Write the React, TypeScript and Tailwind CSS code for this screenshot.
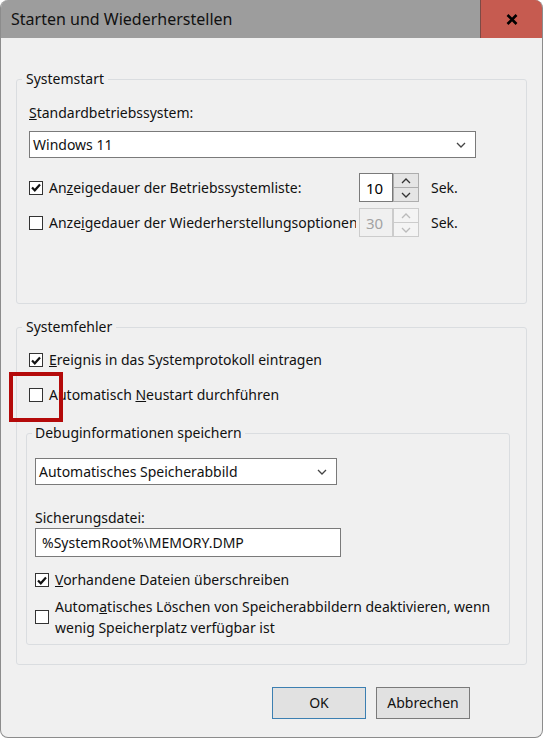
import React, { useState } from 'react';

const font = "font-['Segoe_UI','Noto_Sans',sans-serif]";

// Kleines Häkchen-Kästchen im klassischen Windows-Stil
const CheckBox = ({ checked }: { checked: boolean }) => (
  <span className="flex h-[14px] w-[14px] shrink-0 items-center justify-center border border-[#333333] bg-white">
    {checked && (
      <svg width="10" height="9" viewBox="0 0 10 9">
        <path d="M1 4.5 L3.8 7.3 L9 1.5" fill="none" stroke="#111" strokeWidth="2.2" />
      </svg>
    )}
  </span>
);

const Chevron = ({ color = '#444' }: { color?: string }) => (
  <svg width="10" height="6" viewBox="0 0 10 6">
    <path d="M1 1 L5 5 L9 1" fill="none" stroke={color} strokeWidth="1.3" />
  </svg>
);

const ChevronUp = ({ color = '#444' }: { color?: string }) => (
  <svg width="10" height="6" viewBox="0 0 10 6">
    <path d="M1 5 L5 1 L9 5" fill="none" stroke={color} strokeWidth="1.3" />
  </svg>
);

const Spinner = ({ value, disabled }: { value: string; disabled?: boolean }) => (
  <div className="flex h-[29px]">
    <div
      className={`flex w-[34px] items-center border pl-[6px] text-[15px] ${
        disabled ? 'border-[#cccccc] bg-[#f0f0f0] text-[#a3a3a3]' : 'border-[#7a7a7a] bg-white text-black'
      }`}
    >
      {value}
    </div>
    <div className={`flex w-[26px] flex-col border ${disabled ? 'border-[#cccccc]' : 'border-[#adadad]'}`}>
      <div
        className={`flex flex-1 items-center justify-center border-b ${
          disabled ? 'border-[#cccccc] bg-[#f4f4f4]' : 'border-[#adadad] bg-[#e5e5e5]'
        }`}
      >
        <ChevronUp color={disabled ? '#bbbbbb' : '#333'} />
      </div>
      <div className={`flex flex-1 items-center justify-center ${disabled ? 'bg-[#f4f4f4]' : 'bg-[#e5e5e5]'}`}>
        <Chevron color={disabled ? '#bbbbbb' : '#333'} />
      </div>
    </div>
  </div>
);

const App = () => {
  const [os] = useState('Windows 11');

  return (
    <div className={`h-[739px] w-[544px] bg-white text-[14px] leading-[20px] text-[#111] ${font}`}>
      <div className="flex h-[738px] w-[543px] flex-col overflow-hidden rounded-[8px] border border-t-0 border-[#8c8c8c] bg-[#f0f0f0]">
        {/* Titelleiste */}
        <div className="flex h-[38px] shrink-0 items-center bg-[#9d9d9d]">
          <span className="flex-1 pl-[10px] text-[16px]">Starten und Wiederherstellen</span>
          <div className="flex h-full w-[62px] items-center justify-center border-l border-[#7d4a45] bg-[#c65b50]">
            <svg width="12" height="11" viewBox="0 0 12 11">
              <path d="M1.5 1 L10.5 10 M10.5 1 L1.5 10" stroke="#000" strokeWidth="2.6" />
            </svg>
          </div>
        </div>

        <div className="flex flex-col px-[15px]">
          {/* Systemstart */}
          <fieldset className="mt-[31px] rounded-[3px] border border-[#dadde0] p-0">
            <legend className="ml-[5px] px-[4px]">Systemstart</legend>
            <div className="flex flex-col px-[12px] pb-[66px] pt-[14px]">
              <div>
                <span className="underline">S</span>tandardbetriebssystem:
              </div>
              <div className="mt-[8px] flex h-[27px] w-[447px] items-center justify-between border border-[#7a7a7a] bg-white pl-[3px] pr-[9px]">
                <span>{os}</span>
                <Chevron />
              </div>
              <div className="mt-[15px] flex items-center">
                <div className="flex w-[327px] items-center gap-[6px] overflow-hidden whitespace-nowrap">
                  <CheckBox checked />
                  <span>
                    An<span className="underline">z</span>eigedauer der Betriebssystemliste:
                  </span>
                </div>
                <div className="ml-[3px]">
                  <Spinner value="10" />
                </div>
                <span className="ml-[12px]">Sek.</span>
              </div>
              <div className="mt-[6px] flex items-center">
                <div className="flex w-[327px] items-center gap-[6px] overflow-hidden whitespace-nowrap">
                  <CheckBox checked={false} />
                  <span>
                    Anze<span className="underline">i</span>gedauer der Wiederherstellungsoptionen
                  </span>
                </div>
                <div className="ml-[3px]">
                  <Spinner value="30" disabled />
                </div>
                <span className="ml-[12px]">Sek.</span>
              </div>
            </div>
          </fieldset>

          {/* Systemfehler */}
          <fieldset className="mt-[13px] rounded-[3px] border border-[#dadde0] p-0">
            <legend className="ml-[5px] px-[4px]">Systemfehler</legend>
            <div className="flex flex-col pb-[19px] pl-[9px] pt-[13px]">
              <div className="ml-[3px] flex items-center gap-[6px]">
                <CheckBox checked />
                <span>
                  <span className="underline">E</span>reignis in das Systemprotokoll eintragen
                </span>
              </div>
              <div className="relative ml-[3px] mt-[15px] flex items-center gap-[6px]">
                <CheckBox checked={false} />
                <span>
                  Automatisch <span className="underline">N</span>eustart durchführen
                </span>
                <span className="pointer-events-none absolute left-[-20px] top-[-13px] h-[50px] w-[54px] border-[4px] border-[#b40a0a]" />
              </div>

              {/* Debuginformationen speichern */}
              <fieldset className="mt-[18px] w-[484px] rounded-[3px] border border-[#dadde0] p-0">
                <legend className="ml-[5px] px-[3px]">Debuginformationen speichern</legend>
                <div className="flex flex-col pb-[6px] pl-[8px] pt-[15px]">
                  <div className="flex h-[27px] w-[302px] items-center justify-between border border-[#7a7a7a] bg-white pl-[3px] pr-[9px]">
                    <span>Automatisches Speicherabbild</span>
                    <Chevron />
                  </div>
                  <div className="mt-[23px]">Sicherungsdatei:</div>
                  <div className="flex h-[29px] w-[306px] items-center border border-[#7a7a7a] bg-white pl-[6px]">
                    %SystemRoot%\MEMORY.DMP
                  </div>
                  <div className="mt-[13px] flex items-center gap-[6px]">
                    <CheckBox checked />
                    <span>
                      <span className="underline">V</span>orhandene Dateien überschreiben
                    </span>
                  </div>
                  <div className="mt-[6px] flex items-center gap-[6px]">
                    <CheckBox checked={false} />
                    <span className="whitespace-nowrap leading-[21px]">
                      Autom<span className="underline">a</span>tisches Löschen von Speicherabbildern deaktivieren, wenn
                      <br />
                      wenig Speicherplatz verfügbar ist
                    </span>
                  </div>
                </div>
              </fieldset>
            </div>
          </fieldset>

          {/* Schaltflächen */}
          <div className="mt-[22px] flex justify-end gap-[10px] pr-[57px]">
            <button className="h-[32px] w-[94px] border border-[#3c7fb1] bg-[#e1e1e1]">OK</button>
            <button className="h-[32px] w-[94px] border border-[#7a7a7a] bg-[#e1e1e1]">Abbrechen</button>
          </div>
        </div>
      </div>
    </div>
  );
};

export default App;
